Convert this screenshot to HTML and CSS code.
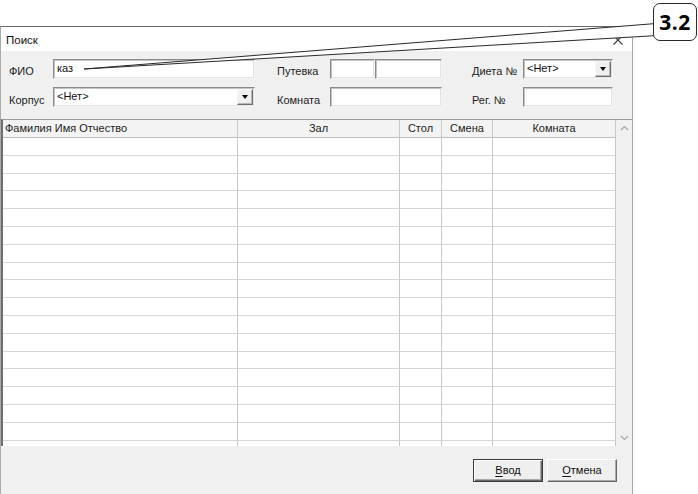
FILE: index.html
```html
<!DOCTYPE html>
<html lang="ru">
<head>
<meta charset="utf-8">
<title>Поиск</title>
<link rel="stylesheet" href="styles.css">
</head>
<body>
<div class="window">
  <div class="titlebar">
    <span class="title">Поиск</span>
    <svg class="close" width="10" height="10" viewBox="0 0 10 10"><path d="M0.5 0.5 L9.5 9.5 M9.5 0.5 L0.5 9.5" stroke="#3a3a3a" stroke-width="1.1" fill="none"/></svg>
  </div>
  <div class="body">
    <div class="form">
      <label class="lbl">ФИО</label>
      <div class="input w202"><span class="val">каз</span></div>
      <label class="lbl">Путевка</label>
      <div class="split">
        <div class="input w45"></div>
        <div class="input w67"></div>
      </div>
      <label class="lbl">Диета №</label>
      <div class="combo w90"><span class="val">&lt;Нет&gt;</span><span class="drop"><i class="tri"></i></span></div>

      <label class="lbl">Корпус</label>
      <div class="combo w202"><span class="val">&lt;Нет&gt;</span><span class="drop"><i class="tri"></i></span></div>
      <label class="lbl">Комната</label>
      <div class="input w112"></div>
      <label class="lbl">Рег. №</label>
      <div class="input w90"></div>
    </div>

    <div class="grid">
      <div class="table">
        <div class="row head">
          <div class="c left">Фамилия Имя Отчество</div>
          <div class="c">Зал</div>
          <div class="c">Стол</div>
          <div class="c">Смена</div>
          <div class="c">Комната</div>
        </div>
        <div class="row"><div class="c"></div><div class="c"></div><div class="c"></div><div class="c"></div><div class="c"></div></div>
        <div class="row"><div class="c"></div><div class="c"></div><div class="c"></div><div class="c"></div><div class="c"></div></div>
        <div class="row"><div class="c"></div><div class="c"></div><div class="c"></div><div class="c"></div><div class="c"></div></div>
        <div class="row"><div class="c"></div><div class="c"></div><div class="c"></div><div class="c"></div><div class="c"></div></div>
        <div class="row"><div class="c"></div><div class="c"></div><div class="c"></div><div class="c"></div><div class="c"></div></div>
        <div class="row"><div class="c"></div><div class="c"></div><div class="c"></div><div class="c"></div><div class="c"></div></div>
        <div class="row"><div class="c"></div><div class="c"></div><div class="c"></div><div class="c"></div><div class="c"></div></div>
        <div class="row"><div class="c"></div><div class="c"></div><div class="c"></div><div class="c"></div><div class="c"></div></div>
        <div class="row"><div class="c"></div><div class="c"></div><div class="c"></div><div class="c"></div><div class="c"></div></div>
        <div class="row"><div class="c"></div><div class="c"></div><div class="c"></div><div class="c"></div><div class="c"></div></div>
        <div class="row"><div class="c"></div><div class="c"></div><div class="c"></div><div class="c"></div><div class="c"></div></div>
        <div class="row"><div class="c"></div><div class="c"></div><div class="c"></div><div class="c"></div><div class="c"></div></div>
        <div class="row"><div class="c"></div><div class="c"></div><div class="c"></div><div class="c"></div><div class="c"></div></div>
        <div class="row"><div class="c"></div><div class="c"></div><div class="c"></div><div class="c"></div><div class="c"></div></div>
        <div class="row"><div class="c"></div><div class="c"></div><div class="c"></div><div class="c"></div><div class="c"></div></div>
        <div class="row"><div class="c"></div><div class="c"></div><div class="c"></div><div class="c"></div><div class="c"></div></div>
        <div class="row"><div class="c"></div><div class="c"></div><div class="c"></div><div class="c"></div><div class="c"></div></div>
        <div class="row"><div class="c"></div><div class="c"></div><div class="c"></div><div class="c"></div><div class="c"></div></div>
      </div>
      <div class="vscroll">
        <svg width="9" height="6" viewBox="0 0 9 6"><path d="M1 5 L4.5 1.5 L8 5" stroke="#a6a6a6" stroke-width="1.2" fill="none"/></svg>
        <svg width="9" height="6" viewBox="0 0 9 6"><path d="M1 1 L4.5 4.5 L8 1" stroke="#a6a6a6" stroke-width="1.2" fill="none"/></svg>
      </div>
    </div>

    <div class="footer">
      <button class="btn default"><u>В</u>вод</button>
      <button class="btn"><u>О</u>тмена</button>
    </div>
  </div>
</div>

<svg class="pointer" width="698" height="494" viewBox="0 0 698 494">
  <polygon points="84,69 656,23.5 658,35.5" fill="#ffffff" stroke="#2a2a2a" stroke-width="1" stroke-linejoin="round"/>
</svg>
<div class="badge">3.2</div>
</body>
</html>
```
FILE: styles.css
```css
html, body {
  margin: 0;
  padding: 0;
  background: #ffffff;
}
body {
  font-family: "Liberation Sans", Arial, sans-serif;
  font-size: 11px;
  color: #1c1c1c;
  width: 698px;
  height: 494px;
  overflow: hidden;
  position: relative;
}
.window {
  margin-top: 26px;
  width: 633px;
  height: 480px;
  box-sizing: border-box;
  border: 1px solid #a9a9a9;
  border-top-color: #6a6a6a;
  display: flex;
  flex-direction: column;
}
.titlebar {
  height: 24px;
  flex: none;
  background: #ffffff;
  display: flex;
  align-items: center;
  justify-content: space-between;
  padding-left: 5px;
  padding-right: 9px;
}
.title {
  font-size: 11.5px;
  color: #111;
  padding-top: 1px;
}
.close {
  display: block;
  margin-top: 2px;
}
.body {
  flex: 1;
  background: #f0f0f0;
  display: flex;
  flex-direction: column;
  overflow: hidden;
}
.form {
  display: grid;
  grid-template-columns: 44px 224px 53px 142px 51px 90px;
  grid-template-rows: 20px 21px;
  row-gap: 8px;
  padding: 8px 0 0 8px;
}
.lbl {
  align-self: end;
  padding-bottom: 1px;
  line-height: 13px;
  color: #1c1c1c;
  white-space: nowrap;
}
.input, .combo {
  box-sizing: border-box;
  height: 20px;
  background: #ffffff;
  border: 1px solid;
  border-color: #8a8a8a #f4f4f4 #f4f4f4 #8a8a8a;
  box-shadow: inset 1px 1px 0 #c4c4c4, inset -1px -1px 0 #e2e2e2;
  display: flex;
  align-items: center;
}
.val {
  padding-left: 3px;
  padding-bottom: 2px;
  color: #111;
}
.w202 { width: 202px; }
.w45 { width: 45px; }
.w67 { width: 67px; }
.w112 { width: 112px; }
.w90 { width: 90px; }
.split {
  display: flex;
}
.combo {
  justify-content: space-between;
}
.drop {
  box-sizing: border-box;
  width: 16px;
  height: 16px;
  margin-right: 1px;
  background: #f0f0f0;
  border: 1px solid;
  border-color: #f8f8f8 #707070 #707070 #f8f8f8;
  box-shadow: inset -1px -1px 0 #b8b8b8;
  display: flex;
  align-items: center;
  justify-content: center;
}
.tri {
  width: 0;
  height: 0;
  border-left: 3.5px solid transparent;
  border-right: 3.5px solid transparent;
  border-top: 4px solid #000;
}
.grid {
  margin-top: 11px;
  height: 327px;
  flex: none;
  box-sizing: border-box;
  border-top: 1px solid #9c9c9c;
  border-left: 2px solid #6e6e6e;
  display: flex;
  overflow: hidden;
}
.table {
  width: 613px;
  background: #ffffff;
  overflow: hidden;
}
.row {
  display: grid;
  grid-template-columns: 235px 162px 42px 51px 123px;
  height: 17.8px;
}
.row.head {
  height: 18px;
  background: #f3f3f3;
}
.c {
  box-sizing: border-box;
  border-right: 1px solid #c8c8c8;
  border-bottom: 1px solid #d6d6d6;
  line-height: 16px;
  text-align: center;
  color: #1c1c1c;
  white-space: nowrap;
  overflow: hidden;
}
.head .c {
  border-bottom-color: #bdbdbd;
}
.c.left {
  text-align: left;
  padding-left: 2px;
}
.vscroll {
  flex: 1;
  background: #f0f0f0;
  display: flex;
  flex-direction: column;
  justify-content: space-between;
  align-items: center;
  padding: 5px 0 5px 0;
}
.vscroll svg {
  display: block;
}
.footer {
  flex: 1;
  display: flex;
  justify-content: flex-end;
  align-items: flex-start;
  gap: 4px;
  padding: 13px 15px 0 0;
}
.btn {
  box-sizing: border-box;
  width: 70px;
  height: 23px;
  padding: 0 0 1px 0;
  font-family: "Liberation Sans", Arial, sans-serif;
  font-size: 11px;
  color: #111;
  background: #efefef;
  border: 1px solid;
  border-color: #ffffff #6a6a6a #6a6a6a #ffffff;
  box-shadow: inset -1px -1px 0 #a8a8a8;
}
.btn.default {
  border: 1px solid #3c3c3c;
  box-shadow: inset 1px 1px 0 #ffffff, inset -1px -1px 0 #6a6a6a, inset -2px -2px 0 #a8a8a8;
}
.btn u {
  text-decoration-thickness: 1px;
  text-underline-offset: 2px;
}
.pointer {
  position: absolute;
  left: 0;
  top: 0;
  pointer-events: none;
}
.badge {
  position: absolute;
  left: 653px;
  top: 3px;
  width: 44px;
  height: 38px;
  box-sizing: border-box;
  border: 1.2px solid #2a2a2a;
  border-radius: 7px;
  background: #ffffff;
  display: flex;
  align-items: center;
  justify-content: center;
  font-family: "Open Sans", "Liberation Sans", sans-serif;
  font-weight: 700;
  font-size: 21px;
  color: #000;
  letter-spacing: 0.5px;
}
```
